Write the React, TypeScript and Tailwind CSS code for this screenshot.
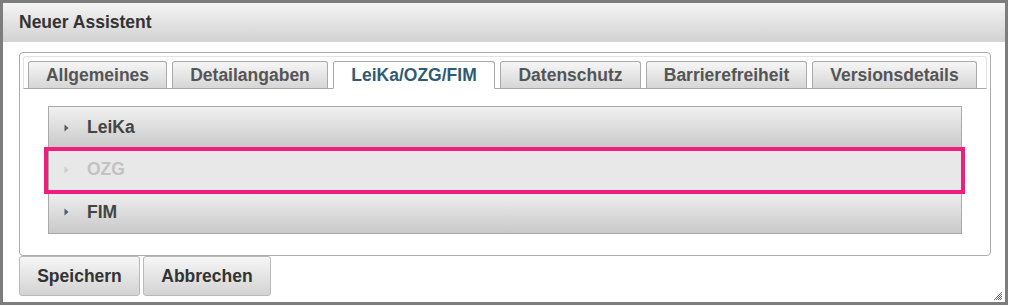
import React from 'react';

const tabs = [
  { label: 'Allgemeines', w: 'w-[139px]' },
  { label: 'Detailangaben', w: 'w-[156px]' },
  { label: 'LeiKa/OZG/FIM', w: 'w-[162px]', active: true },
  { label: 'Datenschutz', w: 'w-[141px]' },
  { label: 'Barrierefreiheit', w: 'w-[161px]' },
  { label: 'Versionsdetails', w: 'w-[165px]' },
];

const Arrow = ({ muted }: { muted?: boolean }) => (
  <svg width="5" height="8" viewBox="0 0 5 8" className="shrink-0">
    <path d="M0.5 0.5 L4.5 4 L0.5 7.5 Z" fill={muted ? '#c8cdd2' : '#4b5d6e'} />
  </svg>
);

const AccordionHeader = ({ label, disabled, last }: { label: string; disabled?: boolean; last?: boolean }) => (
  <div
    className={
      'flex h-[42px] items-center gap-[18px] pl-[15px] ' +
      (last ? '' : 'border-b border-[#c4c4c4] ') +
      (disabled
        ? 'bg-[#e8e8e8] text-[#c2c2c2]'
        : 'bg-gradient-to-b from-[#f1f1f1] to-[#c9c9c9] text-[#444]')
    }
  >
    <Arrow muted={disabled} />
    <span className="text-[17.5px] font-bold">{label}</span>
  </div>
);

export default function App() {
  return (
    <div className="h-[306px] w-[1009px] bg-white font-['Liberation_Sans',Arial,sans-serif]">
      <div className="flex h-[305px] w-[1008px] flex-col border-[3px] border-[#7d7d7d] bg-white">
        {/* title bar */}
        <div className="flex h-[39px] shrink-0 items-center bg-gradient-to-b from-[#f4f4f4] to-[#d2d2d2] pl-[16px]">
          <span className="text-[17.5px] font-bold text-[#333]">Neuer Assistent</span>
        </div>

        <div className="relative flex-1 pl-[16px] pt-[10px]">
          {/* tab container */}
          <div className="h-[204px] w-[972px] rounded-[4px] border border-[#acacac] p-[3px]">
            <div className="flex h-[33px] gap-[5px] rounded-t-[3px] border border-[#e2e2e2] border-b-[#a8a8a8] pl-[4px] pt-[4px]">
              {tabs.map((t) => (
                <div
                  key={t.label}
                  className={
                    'flex h-[28px] items-center justify-center rounded-t-[3px] border border-[#aaa] text-[17.5px] font-bold ' +
                    t.w +
                    (t.active
                      ? ' border-b-white bg-white text-[#2f5b73]'
                      : ' border-b-[#a8a8a8] bg-gradient-to-b from-[#f6f6f6] to-[#d6d6d6] text-[#555]')
                  }
                >
                  {t.label}
                </div>
              ))}
            </div>

            {/* accordion */}
            <div className="ml-[25px] mt-[17px] w-[914px] border border-[#aaa] bg-white">
              <AccordionHeader label="LeiKa" />
              <div className="relative">
                <AccordionHeader label="OZG" disabled />
                <div className="pointer-events-none absolute -bottom-[3px] -left-[5px] -right-[4px] -top-[2px] border-[4px] border-[#f01c7e]" />
              </div>
              <AccordionHeader label="FIM" last />
            </div>
          </div>

          {/* buttons */}
          <div className="flex gap-[3px]">
            <button className="flex h-[40px] w-[121px] items-center justify-center rounded-[3px] border border-[#b9b9b9] bg-gradient-to-b from-[#f6f6f6] to-[#d3d3d3] text-[17.5px] font-bold text-[#333]">
              Speichern
            </button>
            <button className="flex h-[40px] w-[128px] items-center justify-center rounded-[3px] border border-[#b9b9b9] bg-gradient-to-b from-[#f6f6f6] to-[#d3d3d3] text-[17.5px] font-bold text-[#333]">
              Abbrechen
            </button>
          </div>

          {/* resize grip */}
          <svg width="8" height="8" viewBox="0 0 8 8" className="absolute bottom-[2px] right-[3px]">
            <g fill="#666">
              <rect x="7" y="0" width="1" height="1" />
              <rect x="6" y="1" width="1" height="1" />
              <rect x="5" y="2" width="1" height="1" />
              <rect x="7" y="2" width="1" height="1" />
              <rect x="4" y="3" width="1" height="1" />
              <rect x="6" y="3" width="1" height="1" />
              <rect x="3" y="4" width="1" height="1" />
              <rect x="5" y="4" width="1" height="1" />
              <rect x="7" y="4" width="1" height="1" />
              <rect x="2" y="5" width="1" height="1" />
              <rect x="4" y="5" width="1" height="1" />
              <rect x="6" y="5" width="1" height="1" />
              <rect x="1" y="6" width="1" height="1" />
              <rect x="3" y="6" width="1" height="1" />
              <rect x="5" y="6" width="1" height="1" />
              <rect x="7" y="6" width="1" height="1" />
              <rect x="0" y="7" width="1" height="1" />
              <rect x="2" y="7" width="1" height="1" />
              <rect x="4" y="7" width="1" height="1" />
              <rect x="6" y="7" width="1" height="1" />
            </g>
          </svg>
        </div>
      </div>
    </div>
  );
}
